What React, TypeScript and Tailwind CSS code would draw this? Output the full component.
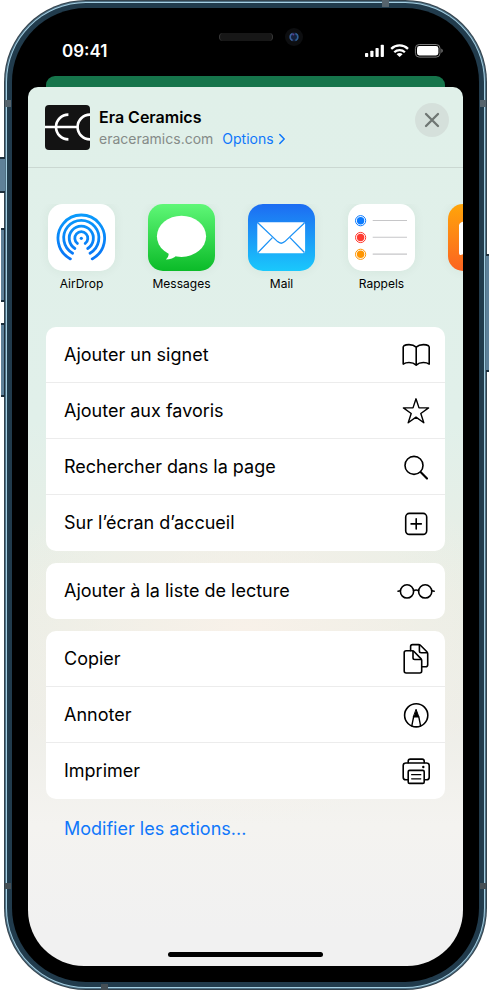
import React from 'react';

const AirDropIcon = () => (
  <svg viewBox="0 0 67 67" className="size-full">
    <defs>
      <linearGradient id="airdrop" x1="0" y1="10" x2="0" y2="56" gradientUnits="userSpaceOnUse">
        <stop offset="0" stopColor="#0a9bfb" />
        <stop offset="1" stopColor="#0a74f6" />
      </linearGradient>
    </defs>
    <rect width="67" height="67" fill="#fff" />
    <g fill="none" stroke="url(#airdrop)" strokeWidth="2.8" strokeLinecap="round">
      <path d="M22.4 54.9A23.3 23.3 0 1 1 44.2 54.9" />
      <path d="M24.6 49.2A17.6 17.6 0 1 1 42 49.2" />
      <path d="M26.9 44.5A12.1 12.1 0 1 1 39.7 44.5" />
      <path d="M29.4 39.4A6.5 6.5 0 1 1 37.2 39.4" />
    </g>
    <circle cx="33.3" cy="34.3" r="1.6" fill="#0a84f8" />
  </svg>
);

const MessagesIcon = () => (
  <svg viewBox="0 0 67 67" className="size-full">
    <defs>
      <linearGradient id="messages" x1="0" y1="0" x2="0" y2="1">
        <stop offset="0" stopColor="#5ff777" />
        <stop offset="1" stopColor="#0bbb28" />
      </linearGradient>
    </defs>
    <rect width="67" height="67" fill="url(#messages)" />
    <ellipse cx="33.5" cy="32.3" rx="24.6" ry="20.6" fill="#fff" />
    <path d="M20.5 48.5C21 51.5 20 53.8 17.8 55.4C22.3 55.4 26 53.8 28.5 51.4Z" fill="#fff" />
  </svg>
);

const MailIcon = () => (
  <svg viewBox="0 0 67 67" className="size-full">
    <defs>
      <linearGradient id="mail" x1="0" y1="0" x2="0" y2="1">
        <stop offset="0" stopColor="#1d6cf2" />
        <stop offset="1" stopColor="#1ac8fc" />
      </linearGradient>
    </defs>
    <rect width="67" height="67" fill="url(#mail)" />
    <rect x="9.3" y="18.2" width="47.8" height="31" rx="2.2" fill="#fff" />
    <g fill="none" stroke="#1d93f6" strokeWidth="1.3">
      <path d="M10 19L29.6 37.6Q33.2 40.8 36.8 37.6L56.4 19" />
      <path d="M10 48.5L24.4 33.6M56.4 48.5L42 33.6" />
    </g>
  </svg>
);

const RemindersIcon = () => (
  <svg viewBox="0 0 67 67" className="size-full">
    <rect width="67" height="67" fill="#fff" />
    {[
      { y: 16.7, color: '#0a7aff' },
      { y: 33.5, color: '#ff3b30' },
      { y: 50.3, color: '#ff9500' },
    ].map(({ y, color }) => (
      <g key={color}>
        <circle cx="12.6" cy={y} r="5.1" fill="none" stroke={color} strokeWidth="1" />
        <circle cx="12.6" cy={y} r="3.7" fill={color} />
        <path d={`M24.7 ${y - 0.2}H59`} stroke="#c6c6c8" strokeWidth="1.1" />
      </g>
    ))}
  </svg>
);

const BooksIcon = () => (
  <svg viewBox="0 0 67 67" className="size-full">
    <defs>
      <linearGradient id="books" x1="0" y1="0" x2="0" y2="1">
        <stop offset="0" stopColor="#ffa50a" />
        <stop offset="1" stopColor="#fb6321" />
      </linearGradient>
    </defs>
    <rect width="67" height="67" fill="url(#books)" />
    <path
      d="M33 21C27 16 18 16 13 18.4Q11 19.4 11 21.5V49Q11 51.8 13.5 50.8C20 48.2 28 48.4 32.5 52H34.5C39 48.4 47 48.2 53.5 50.8Q56 51.8 56 49V21.5Q56 19.4 54 18.4C49 16 40 16 34 21Z"
      fill="#fff"
    />
  </svg>
);

// glyphs on the right of each action, all drawn on the same 40x32 box
const Glyph = ({ children }: { children: React.ReactNode }) => (
  <svg
    viewBox="0 1 40 32"
    className="w-10 h-8 shrink-0"
    fill="none"
    stroke="#000"
    strokeWidth="1.6"
    strokeLinecap="round"
    strokeLinejoin="round"
  >
    {children}
  </svg>
);

const groups = [
  [
    {
      label: 'Ajouter un signet',
      icon: (
        <path d="M20.2 9.2C18.2 7.3 15.6 6.6 13 6.6C11 6.6 9.2 7 7.9 7.8Q7.2 8.3 7.2 9.2V26.1C8.8 25 10.8 24.5 13 24.5C15.8 24.5 18.3 25.3 20.2 27.1C22.1 25.3 24.6 24.5 27.4 24.5C29.6 24.5 31.6 25 33.2 26.1V9.2Q33.2 8.3 32.5 7.8C31.2 7 29.4 6.6 27.4 6.6C24.8 6.6 22.2 7.3 20.2 9.2ZM20.2 9.2V27" />
      ),
    },
    {
      label: 'Ajouter aux favoris',
      icon: (
        <path d="M20 4.8L23 13.9H32.6L24.8 19.5L27.8 28.8L20 23.1L12.2 28.8L15.2 19.5L7.4 13.9H17Z" strokeWidth="1.4" />
      ),
    },
    {
      label: 'Rechercher dans la page',
      icon: (
        <>
          <circle cx="18" cy="15.4" r="9" />
          <path d="M24.8 22.2L31 28.6" strokeWidth="2.1" />
        </>
      ),
    },
    {
      label: 'Sur l’écran d’accueil',
      icon: (
        <>
          <rect x="9.7" y="7.4" width="21" height="21" rx="3.6" />
          <path d="M20.2 12.8V23M15.1 17.9H25.3" />
        </>
      ),
    },
  ],
  [
    {
      label: 'Ajouter à la liste de lecture',
      icon: (
        <>
          <circle cx="11" cy="17.4" r="6.6" />
          <circle cx="29.2" cy="17.4" r="6.6" />
          <path d="M17.6 16.6Q20.1 15.4 22.6 16.6M4.3 16.8L2 17.2M35.9 16.8L38.2 17.2" />
        </>
      ),
    },
  ],
  [
    {
      label: 'Copier',
      icon: (
        <>
          <path d="M14.6 8.6V4.6Q14.6 2.6 16.6 2.6H22.6Q23.7 2.6 24.4 3.3L30.9 9.8Q31.7 10.6 31.7 11.7V22.8Q31.7 24.8 29.7 24.8H26" />
          <path d="M23.4 3V9Q23.4 10.7 25.1 10.7H31" />
          <path d="M10.2 8.8H16.2Q17.3 8.8 18 9.5L24.9 16.6Q25.7 17.4 25.7 18.5V29Q25.7 31 23.7 31H10.2Q8.2 31 8.2 29V10.8Q8.2 8.8 10.2 8.8Z" />
          <path d="M17 9.2V15.8Q17 17.5 18.7 17.5H25" />
        </>
      ),
    },
    {
      label: 'Annoter',
      icon: (
        <>
          <circle cx="20.2" cy="17.3" r="11.6" />
          <path d="M15.8 27.8L17.6 18.8H22.8L24.6 27.8" strokeWidth="1.4" />
          <path d="M20.2 11.6L22.8 18.8L20.2 18.2L17.6 18.8Z" fill="#000" strokeWidth="1" />
        </>
      ),
    },
    {
      label: 'Imprimer',
      icon: (
        <>
          <path d="M11.6 25.8H9.8Q7.2 25.8 7.2 23.2V11.6Q7.2 9 9.8 9H30.6Q33.2 9 33.2 11.6V23.2Q33.2 25.8 30.6 25.8H28.6" />
          <path d="M12.2 8.8V7.2Q12.2 5.1 14.3 5.1H26.1Q28.2 5.1 28.2 7.2V8.8" />
          <rect x="12.2" y="16.4" width="16" height="13" rx="1.4" />
          <path d="M15.6 20.7H24.8M15.6 24.8H24.8" strokeWidth="1.2" />
          <circle cx="27.3" cy="13" r="1.2" fill="#000" stroke="none" />
        </>
      ),
    },
  ],
];

const apps = [
  { name: 'AirDrop', icon: <AirDropIcon /> },
  { name: 'Messages', icon: <MessagesIcon /> },
  { name: 'Mail', icon: <MailIcon /> },
  { name: 'Rappels', icon: <RemindersIcon /> },
  { name: '', icon: <BooksIcon /> },
];

const StatusBar = () => (
  <div className="h-[68px] pt-[31px] pl-[34px] pr-5 flex items-start justify-between text-white">
    <span className="text-[17px] leading-6 font-semibold">09:41</span>
    <svg viewBox="0 0 80 16" className="w-20 h-4 mt-1" fill="#fff">
      <rect x="2" y="10" width="3.2" height="4" rx="0.8" />
      <rect x="7.3" y="7.8" width="3.2" height="6.2" rx="0.8" />
      <rect x="12.5" y="5" width="3.2" height="9" rx="0.8" />
      <rect x="17.7" y="1.8" width="3.2" height="12.2" rx="0.8" />
      <g fill="none" stroke="#fff" strokeWidth="2.3">
        <path d="M28.2 5.9A12 12 0 0 1 45 5.9" />
        <path d="M31.3 9.2A7.6 7.6 0 0 1 41.9 9.2" />
      </g>
      <path d="M36.6 14.1L33.6 11.2A4.2 4.2 0 0 1 39.6 11.2Z" />
      <rect x="52.4" y="1.5" width="24.6" height="12.6" rx="3.8" fill="none" stroke="#7b7b7b" />
      <rect x="54" y="3.1" width="21.4" height="9.4" rx="2.4" />
      <path d="M78.3 5.6V10Q79.8 9.3 79.8 7.8Q79.8 6.3 78.3 5.6Z" fill="#7b7b7b" />
    </svg>
  </div>
);

const ShareHeader = () => (
  <header className="h-[81px] pl-[17px] pr-[14px] pt-4 flex items-start border-b border-[#cbd8d2]">
    <svg viewBox="0 0 45 45" className="size-[45px] mt-[2px] rounded shrink-0">
      <rect width="45" height="45" fill="#131313" />
      <g fill="none" stroke="#fff" strokeWidth="2.6">
        <path d="M0 22H32" />
        <path d="M23.4 9.6A12.4 12.4 0 0 0 23.4 34.4" />
        <path d="M45 9.6A12.4 12.4 0 0 0 45 34.4" />
      </g>
    </svg>
    <div className="ml-[9px] mt-1 flex-1">
      <h1 className="text-base leading-5 font-semibold text-black">Era Ceramics</h1>
      <p className="flex items-center text-sm leading-6">
        <span className="text-[#858b88]">eraceramics.com</span>
        <a href="#options" className="ml-[9px] flex items-center gap-1 text-[#0f77fb]">
          Options
          <svg viewBox="0 0 8 12" className="w-2 h-3" fill="none" stroke="currentColor" strokeWidth="1.5" strokeLinecap="round" strokeLinejoin="round">
            <path d="M1.8 1.5L6.2 6L1.8 10.5" />
          </svg>
        </a>
      </p>
    </div>
    <button aria-label="Fermer" className="size-[34px] rounded-full bg-[#d5e0db] flex items-center justify-center">
      <svg viewBox="0 0 16 16" className="size-4" stroke="#6f7673" strokeWidth="2.3" strokeLinecap="round">
        <path d="M2 2L14 14M14 2L2 14" />
      </svg>
    </button>
  </header>
);

const ShareSheet = () => (
  <main className="flex-1 flex flex-col overflow-hidden rounded-t-[10px] rounded-b-[56px] bg-[radial-gradient(ellipse_60%_22%_at_50%_62%,#f8f1e9_0%,#f8f1e900_100%),linear-gradient(180deg,#e0f0e9_0%,#e1f0ea_38%,#eaeee5_58%,#eeeee8_72%,#f4f3f0_84%,#f1f1f1_96%)]">
    <ShareHeader />
    <ul className="mt-9 pl-5 flex gap-[33px] overflow-hidden pb-4 -mb-4">
      {apps.map(({ name, icon }) => (
        <li key={name} className="w-[67px] shrink-0">
          <button className="w-full flex flex-col items-center" aria-label={name || 'Livres'}>
            <span className="block size-[67px] rounded-[15px] overflow-hidden shadow-[0_0_12px_rgba(0,60,30,0.06)]">{icon}</span>
            <span className="mt-[5px] h-4 text-xs leading-4 text-black whitespace-nowrap">{name}</span>
          </button>
        </li>
      ))}
    </ul>
    <div className="mt-[35px] px-[18px] flex flex-col gap-3">
      {groups.map((group) => (
        <ul key={group[0].label} className="bg-white rounded-[10px] overflow-hidden divide-y divide-[#ececec]">
          {group.map(({ label, icon }) => (
            <li key={label} className="h-14">
              <button className="w-full h-full pl-[18px] pr-[9px] flex items-center justify-between text-left text-lg text-black">
                {label}
                <Glyph>{icon}</Glyph>
              </button>
            </li>
          ))}
        </ul>
      ))}
      <button className="self-start ml-[18px] mt-[2px] h-8 text-lg text-[#0f77fb]">Modifier les actions...</button>
    </div>
    {/* home indicator */}
    <div className="mt-auto mb-[9px] self-center w-[155px] h-[5px] rounded-full bg-black" />
  </main>
);

// side keys and antenna bands sit on top of the metal frame
const FrameDetails = () => (
  <>
    <span className="absolute -left-1 top-[157px] w-[5px] h-9 bg-[#5f8199] border-y-2 border-[#1d2f3c]" />
    <span className="absolute -left-[3px] top-[228px] w-1 h-[74px] bg-[#5f8199] border-y-2 border-r border-[#1d2f3c]" />
    <span className="absolute -left-[3px] top-[323px] w-1 h-[74px] bg-[#5f8199] border-y-2 border-r border-[#1d2f3c]" />
    <span className="absolute -right-[2px] top-[254px] w-[3px] h-[118px] bg-[#5f8199] border-y-2 border-[#1d2f3c]" />
    <span className="absolute left-px top-[100px] w-[6px] h-[7px] bg-[#56646d]" />
    <span className="absolute right-px top-[100px] w-[6px] h-[7px] bg-[#56646d]" />
    <span className="absolute left-px bottom-[101px] w-[6px] h-[6px] bg-[#454f55]" />
    <span className="absolute right-px bottom-[101px] w-[6px] h-[6px] bg-[#454f55]" />
    <span className="absolute right-[98px] top-0 w-[7px] h-[7px] bg-[#56646d]" />
    <span className="absolute left-[97px] bottom-0 w-[7px] h-[6px] bg-[#454f55]" />
  </>
);

const App = () => {
  return (
    <div className="min-h-screen flex flex-col bg-white pl-1 pr-[2px] font-['Inter','Liberation_Sans',sans-serif]">
      <div className="relative flex-1 flex flex-col rounded-[82px] p-px bg-[#33424c]">
        <div className="flex-1 flex flex-col rounded-[81px] p-px bg-[#4f7185]">
          <div className="flex-1 flex flex-col rounded-[80px] p-px bg-[#a5cfe2]">
            <div className="flex-1 flex flex-col rounded-[79px] p-[5px] bg-[#213b4c]">
              <div className="relative flex-1 flex flex-col rounded-[74px] bg-black px-4 pb-4">
                <StatusBar />
                {/* speaker and front camera */}
                <div className="absolute top-[20px] left-1/2 ml-[-27px] flex items-center gap-3">
                  <span className="w-[54px] h-2 rounded-full bg-[#171717] border-x border-[#3a3a3a]" />
                  <svg viewBox="0 0 18 18" className="size-[18px]">
                    <circle cx="9" cy="9" r="9" fill="#0d0e10" />
                    <circle cx="9" cy="9" r="4.4" fill="#14203c" />
                    <path d="M7.6 5.6A3.6 3.6 0 0 0 7.6 12.4" fill="none" stroke="#3a5f9a" strokeWidth="1.6" />
                    <path d="M10.4 5.6A3.6 3.6 0 0 1 10.4 12.4" fill="none" stroke="#2f5f94" strokeWidth="1.6" />
                    <circle cx="8.4" cy="6.6" r="1" fill="#5b3f91" />
                  </svg>
                </div>
                <div className="h-[11px] mx-[18px] rounded-t-[9px] bg-[#16754b]" />
                <ShareSheet />
              </div>
            </div>
          </div>
        </div>
        <FrameDetails />
      </div>
    </div>
  );
};

export default App;
